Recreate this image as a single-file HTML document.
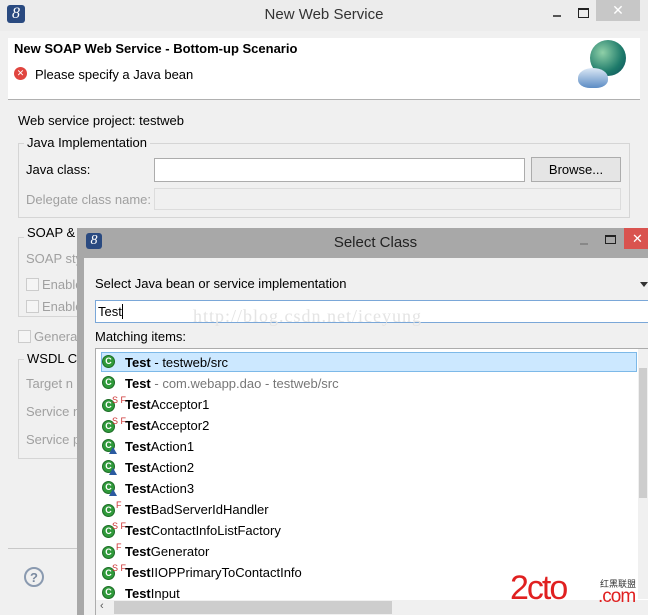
<!DOCTYPE html>
<html><head><meta charset="utf-8"><style>
*{margin:0;padding:0;box-sizing:border-box}
body{width:648px;height:615px;overflow:hidden;background:#f0f0f0;font-family:"Liberation Sans","Noto Sans CJK SC",sans-serif;font-size:12.5px;color:#000;position:relative}
.a{position:absolute}
.dis{color:#a0a0a0}
.ic{width:13px;height:13px;border-radius:50%;background:#2f9a3a;border:1px solid #1f6d28;color:#fff;font-size:9px;font-weight:bold;text-align:center;line-height:11px}
.row{position:absolute;left:102px;height:21px;line-height:21px;font-size:13px;white-space:nowrap}
.row b{font-weight:bold}
.sup{position:absolute;top:-5px;font-size:9px;color:#c33}
</style></head><body>
<div class="a" style="left:0;top:0;width:648px;height:31px;background:#ececec"></div>
<div class="a" style="left:7px;top:5px;width:18px;height:18px;background:#2a4a80;border-radius:3px;color:#fff;font-style:italic;font-family:'Liberation Serif',serif;font-size:16px;text-align:center;line-height:18px">8</div>
<div class="a" style="left:0;top:6px;width:648px;text-align:center;font-size:15px;color:#333">New Web Service</div>
<div class="a" style="left:553px;top:15px;width:8px;height:2px;background:#555"></div>
<div class="a" style="left:578px;top:8px;width:11px;height:10px;border:1px solid #222;border-top-width:2px"></div>
<div class="a" style="left:596px;top:0;width:44px;height:21px;background:#c7c7c7;color:#fff;text-align:center;font-size:14px;line-height:21px">✕</div>
<div class="a" style="left:8px;top:38px;width:632px;height:62px;background:#fff;border-bottom:1px solid #b0b0b0"></div>
<div class="a" style="left:14px;top:41px;font-weight:bold;font-size:13px">New SOAP Web Service - Bottom-up Scenario</div>
<div class="a" style="left:14px;top:67px;width:13px;height:13px;border-radius:50%;background:#e0453f;color:#fff;font-size:9px;text-align:center;line-height:13px">✕</div>
<div class="a" style="left:35px;top:67px;font-size:13px">Please specify a Java bean</div>
<div class="a" style="left:590px;top:40px;width:36px;height:36px;border-radius:50%;background:radial-gradient(circle at 35% 35%,#8fd0a8,#1d7a6a 60%,#0d4a5a)"></div>
<div class="a" style="left:578px;top:68px;width:30px;height:20px;border-radius:50% 50% 40% 40%;background:linear-gradient(#dbe8f5,#5c8cc4)"></div>
<div class="a" style="left:18px;top:113px;font-size:13px">Web service project: testweb</div>
<div class="a" style="left:18px;top:143px;width:612px;height:75px;border:1px solid #d5d5d5"></div>
<div class="a" style="left:24px;top:135px;background:#f0f0f0;padding:0 3px;font-size:13px">Java Implementation</div>
<div class="a" style="left:26px;top:162px;font-size:13px">Java class:</div>
<div class="a" style="left:154px;top:158px;width:371px;height:24px;background:#fff;border:1px solid #acacac"></div>
<div class="a" style="left:531px;top:157px;width:90px;height:25px;background:#e5e5e5;border:1px solid #acacac;text-align:center;line-height:23px;font-size:13px">Browse...</div>
<div class="a dis" style="left:26px;top:192px;font-size:13px">Delegate class name:</div>
<div class="a" style="left:154px;top:188px;width:467px;height:22px;background:#f0f0f0;border:1px solid #dcdcdc"></div>
<div class="a" style="left:18px;top:237px;width:60px;height:80px;border:1px solid #d5d5d5;border-right:none"></div>
<div class="a" style="left:24px;top:225px;background:#f0f0f0;padding:0 3px;font-size:13px">SOAP &amp;</div>
<div class="a dis" style="left:26px;top:251px;font-size:13px">SOAP sty</div>
<div class="a" style="left:26px;top:278px;width:13px;height:13px;border:1px solid #ccc;background:#f5f5f5"></div>
<div class="a dis" style="left:42px;top:277px;font-size:13px">Enable</div>
<div class="a" style="left:26px;top:300px;width:13px;height:13px;border:1px solid #ccc;background:#f5f5f5"></div>
<div class="a dis" style="left:42px;top:299px;font-size:13px">Enable</div>
<div class="a" style="left:18px;top:330px;width:13px;height:13px;border:1px solid #ccc;background:#f5f5f5"></div>
<div class="a dis" style="left:34px;top:329px;font-size:13px">Genera</div>
<div class="a" style="left:18px;top:359px;width:60px;height:100px;border:1px solid #d5d5d5;border-right:none"></div>
<div class="a" style="left:24px;top:351px;background:#f0f0f0;padding:0 3px;font-size:13px">WSDL Cu</div>
<div class="a dis" style="left:26px;top:376px;font-size:13px">Target n</div>
<div class="a dis" style="left:26px;top:404px;font-size:13px">Service n</div>
<div class="a dis" style="left:26px;top:432px;font-size:13px">Service p</div>
<div class="a" style="left:8px;top:548px;width:70px;height:1px;background:#c8c8c8"></div>
<div class="a" style="left:24px;top:567px;width:20px;height:20px;border-radius:50%;border:2px solid #8a9ab0;color:#7a8aa0;text-align:center;font-weight:bold;font-size:13px;line-height:17px">?</div>
<div class="a" style="left:77px;top:228px;width:571px;height:387px;background:#a8a8a8"></div>
<div class="a" style="left:86px;top:233px;width:16px;height:16px;background:#2a4a80;border-radius:3px;color:#fff;font-style:italic;font-family:'Liberation Serif',serif;font-size:14px;text-align:center;line-height:16px">8</div>
<div class="a" style="left:77px;top:234px;width:597px;text-align:center;font-size:15px;color:#222">Select Class</div>
<div class="a" style="left:580px;top:243px;width:8px;height:2px;background:#888"></div>
<div class="a" style="left:605px;top:235px;width:11px;height:9px;border:1px solid #222;border-top-width:2px"></div>
<div class="a" style="left:624px;top:228px;width:24px;height:21px;background:#d9534f;color:#fff;font-size:13px;line-height:21px;padding-left:8px">✕</div>
<div class="a" style="left:84px;top:258px;width:564px;height:357px;background:#f0f0f0"></div>
<div class="a" style="left:95px;top:276px;font-size:13px">Select Java bean or service implementation</div>
<div class="a" style="left:640px;top:282px;width:0;height:0;border-left:4px solid transparent;border-right:4px solid transparent;border-top:5px solid #333"></div>
<div class="a" style="left:95px;top:300px;width:553px;height:23px;background:#fff;border:1px solid #7aa7d8;border-right:none;padding-left:2px;line-height:21px;font-size:13px">Test<span style="border-left:1px solid #000;margin-left:0"></span></div>
<div class="a" style="left:193px;top:306px;font-family:'Liberation Serif',serif;font-size:18px;color:#e4e4e4;letter-spacing:1px">http://blog.csdn.net/iceyung</div>
<div class="a" style="left:95px;top:329px;font-size:13px">Matching items:</div>
<div class="a" style="left:95px;top:348px;width:553px;height:267px;background:#fff;border:1px solid #acacac;border-right:none"></div>
<div class="a" style="left:101px;top:352px;width:536px;height:20px;background:#cce8ff;border:1px solid #7db9e8"></div>
<div class="a" style="left:638px;top:349px;width:10px;height:250px;background:#f0f0f0"></div>
<div class="a" style="left:639px;top:368px;width:8px;height:130px;background:#cdcdcd"></div>
<div class="a" style="left:96px;top:600px;width:552px;height:15px;background:#f0f0f0"></div>
<div class="a" style="left:114px;top:601px;width:278px;height:13px;background:#cdcdcd"></div>
<div class="a" style="left:100px;top:600px;color:#555;font-size:11px">‹</div>

<div class="row" style="top:352px"><span class="a ic" style="left:0;top:3px">C</span><span style="margin-left:23px"><b>Test</b> - testweb/src</span></div>
<div class="row" style="top:373px"><span class="a ic" style="left:0;top:3px">C</span><span style="margin-left:23px"><b>Test</b> <span style="color:#777">- com.webapp.dao - testweb/src</span></span></div>
<div class="row" style="top:394px"><span class="a ic" style="left:0;top:5px">C</span><span class="sup" style="left:10px;top:0;line-height:12px">S F</span><span style="margin-left:23px"><b>Test</b>Acceptor1</span></div>
<div class="row" style="top:415px"><span class="a ic" style="left:0;top:5px">C</span><span class="sup" style="left:10px;top:0;line-height:12px">S F</span><span style="margin-left:23px"><b>Test</b>Acceptor2</span></div>
<div class="row" style="top:436px"><span class="a ic" style="left:0;top:3px">C</span><span class="a" style="left:7px;top:11px;width:0;height:0;border-left:4px solid transparent;border-right:4px solid transparent;border-bottom:7px solid #2a5aa0"></span><span style="margin-left:23px"><b>Test</b>Action1</span></div>
<div class="row" style="top:457px"><span class="a ic" style="left:0;top:3px">C</span><span class="a" style="left:7px;top:11px;width:0;height:0;border-left:4px solid transparent;border-right:4px solid transparent;border-bottom:7px solid #2a5aa0"></span><span style="margin-left:23px"><b>Test</b>Action2</span></div>
<div class="row" style="top:478px"><span class="a ic" style="left:0;top:3px">C</span><span class="a" style="left:7px;top:11px;width:0;height:0;border-left:4px solid transparent;border-right:4px solid transparent;border-bottom:7px solid #2a5aa0"></span><span style="margin-left:23px"><b>Test</b>Action3</span></div>
<div class="row" style="top:499px"><span class="a ic" style="left:0;top:5px">C</span><span class="sup" style="left:14px;top:0;line-height:12px">F</span><span style="margin-left:23px"><b>Test</b>BadServerIdHandler</span></div>
<div class="row" style="top:520px"><span class="a ic" style="left:0;top:5px">C</span><span class="sup" style="left:10px;top:0;line-height:12px">S F</span><span style="margin-left:23px"><b>Test</b>ContactInfoListFactory</span></div>
<div class="row" style="top:541px"><span class="a ic" style="left:0;top:5px">C</span><span class="sup" style="left:14px;top:0;line-height:12px">F</span><span style="margin-left:23px"><b>Test</b>Generator</span></div>
<div class="row" style="top:562px"><span class="a ic" style="left:0;top:5px">C</span><span class="sup" style="left:10px;top:0;line-height:12px">S F</span><span style="margin-left:23px"><b>Test</b>IIOPPrimaryToContactInfo</span></div>
<div class="row" style="top:583px;height:17px;overflow:hidden"><span class="a ic" style="left:0;top:3px">C</span><span style="margin-left:23px"><b>Test</b>Input</span></div>

<div class="a" style="left:510px;top:570px;font-size:34px;color:#e02020;letter-spacing:-2px;line-height:36px">2cto</div>
<div class="a" style="left:600px;top:577px;font-size:9px;color:#333">红黑联盟</div>
<div class="a" style="left:598px;top:586px;font-size:19px;color:#e02020;letter-spacing:-1px">.com</div>
</body></html>
